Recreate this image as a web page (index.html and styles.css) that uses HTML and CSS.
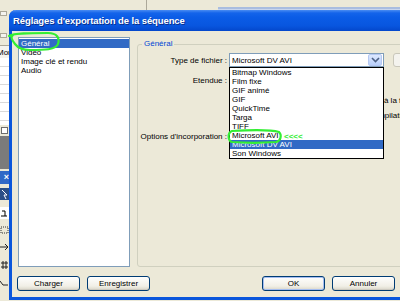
FILE: index.html
```html
<!DOCTYPE html>
<html lang="fr">
<head>
  <meta charset="UTF-8" />
  <title>Réglages d'exportation de la séquence</title>
  <link rel="stylesheet" href="styles.css">
</head>
<body>
  <!-- application behind the dialog -->
  <div class="app">
    <div class="app-top">
      <div class="top-pane"></div>
      <div class="top-pane right"></div>
    </div>
    <aside class="app-side">
      <div class="side-top"><span class="mini-btn"></span><span class="mini-btn"></span></div>
      <div class="side-tab">Mon</div>
      <div class="side-list"></div>
      <div class="side-icon"><span></span></div>
      <div class="side-dark"></div>
      <div class="palette-head">×</div>
      <div class="tools">
        <svg width="9" height="14" viewBox="0 0 9 14"><rect x="0" y="1" width="9" height="12" fill="#2b4f86"/><path d="M2 3 L7 8 L4 8 L6 12" stroke="#fff" fill="none"/></svg>
        <svg width="9" height="12" viewBox="0 0 9 12"><rect width="9" height="12" fill="#fff"/><path d="M2 4 L5 4 L5 9 M1 9 L7 9" stroke="#000" fill="none"/></svg>
        <svg width="9" height="10" viewBox="0 0 9 10"><rect x="1" y="2" width="7" height="6" fill="none" stroke="#333" stroke-dasharray="1 1"/></svg>
        <svg width="9" height="12" viewBox="0 0 9 12"><path d="M0 6 L8 6 M5 3 L8 6 L5 9" stroke="#222" fill="none"/></svg>
        <svg width="9" height="12" viewBox="0 0 9 12"><path d="M3 2 L3 10 M6 2 L6 10 M1 4 L8 4 M1 8 L8 8" stroke="#222" fill="none"/></svg>
        <svg width="9" height="12" viewBox="0 0 9 12"><path d="M0 4 L3 8 L8 8" stroke="#222" fill="none"/></svg>
      </div>
    </aside>
  </div>

  <!-- the dialog window -->
  <div class="dialog">
    <div class="titlebar">Réglages d'exportation de la séquence</div>
    <div class="dlg-body">
      <div class="dlg-main">
        <ul class="cat-list">
          <li class="sel">Général</li>
          <li>Vidéo</li>
          <li>Image clé et rendu</li>
          <li>Audio</li>
        </ul>

        <fieldset class="group">
          <legend>Général</legend>
          <div class="form">
            <label>Type de fichier :</label>
            <div class="ctl">
              <div class="combo">
                <span>Microsoft DV AVI</span>
                <span class="arrow"><svg width="9" height="6" viewBox="0 0 9 6"><path d="M1 1 L4.5 4.5 L8 1" stroke="#4d6185" stroke-width="1.6" fill="none"/></svg></span>
                <ul class="droplist">
                  <li>Bitmap Windows</li>
                  <li>Film fixe</li>
                  <li>GIF animé</li>
                  <li>GIF</li>
                  <li>QuickTime</li>
                  <li>Targa</li>
                  <li>TIFF</li>
                  <li>Microsoft AVI</li>
                  <li class="sel">Microsoft DV AVI</li>
                  <li>Son Windows</li>
                </ul>
              </div>
              <button class="btn side" disabled></button>
            </div>

            <label>Etendue :</label>
            <div class="ctl">
              <div class="combo"><span class="arrow"></span></div>
            </div>

            <span></span>
            <div class="checks">
              <div class="check-line">
                <span class="check-item"><i class="box"></i></span>
                <span class="check-item"><i class="box"></i><span class="cut">Ajouter au projet à la fin</span></span>
              </div>
              <div class="check-line">
                <span class="check-item"><i class="box"></i></span>
                <span class="check-item"><i class="box"></i><span class="cut">Bip en fin de compilation</span></span>
              </div>
            </div>

            <label>Options d'incorporation :</label>
            <div class="ctl">
              <div class="combo"><span class="arrow"></span></div>
            </div>
          </div>
        </fieldset>
      </div>

      <div class="dlg-buttons">
        <div class="btn-group">
          <button class="btn">Charger</button>
          <button class="btn">Enregistrer</button>
        </div>
        <div class="btn-group">
          <button class="btn default">OK</button>
          <button class="btn">Annuler</button>
        </div>
      </div>
    </div>
  </div>

  <!-- hand drawn green marks on top of the screenshot -->
  <svg class="marks" width="400" height="301" viewBox="0 0 400 301">
    <path d="M9 36 C14 33 30 33 48 33 C57 33 60 38 58 44 C56 50 44 50 30 50 C22 50 18 48 15 44 C12 40 10 37 13 35" />
    <path d="M232 131 C250 130 272 130 279 132 C282 135 281 141 276 142 C262 143 245 143 232 142 C228 141 227 133 232 131 Z" />
    <text x="284" y="139">&lt;&lt;&lt;&lt;</text>
  </svg>
</body>
</html>
```

FILE: styles.css
```css
* {
  margin: 0;
  padding: 0;
  box-sizing: border-box;
}

html, body {
  width: 400px;
  height: 301px;
  overflow: hidden;
  background: #ece9d8;
  font-family: "Liberation Sans", Arial, sans-serif;
  font-size: 8px;
  color: #000;
}

body {
  position: relative;
}

/* background application */
.app {
  display: grid;
  grid-template-columns: 9px 1fr;
  grid-template-rows: 10px 1fr;
  height: 301px;
}

.app-top {
  grid-column: 1 / 3;
  display: flex;
}

.top-pane {
  width: 147px;
  border-right: 1px solid #aca899;
}

.top-pane.right {
  flex: 1;
  margin: 7px 0 0 71px;
  border-right: 0;
  border-top: 2px solid #a9bde0;
  background: #c9d6ee;
}

.app-side {
  display: flex;
  flex-direction: column;
  overflow: hidden;
}

.side-top {
  height: 35px;
  display: flex;
  flex-direction: column;
  gap: 17px;
  padding-top: 1px;
}

.mini-btn {
  width: 7px;
  height: 5px;
  border: 1px solid #aca899;
  background: #f4f3ee;
}

.side-tab {
  height: 13px;
  line-height: 13px;
  background: #f4f3ee;
  border-top: 1px solid #aca899;
  white-space: nowrap;
  overflow: hidden;
  text-indent: -3px;
}

.side-list {
  height: 67px;
  background: repeating-linear-gradient(#fff 0, #fff 8px, #d9d9d9 8px, #d9d9d9 9px);
}

.side-icon {
  height: 11px;
  padding: 2px 0 0 1px;
}

.side-icon span {
  display: block;
  width: 7px;
  height: 7px;
  border: 1px solid #6d6d6d;
  background: #fff;
}

.side-dark {
  height: 33px;
  background: #7b7b7b;
}

.palette-head {
  height: 13px;
  margin-top: 2px;
  background: #3169c6;
  color: #fff;
  font-weight: bold;
  font-size: 9px;
  line-height: 13px;
  text-align: right;
}

.tools {
  display: flex;
  flex-direction: column;
  gap: 6px;
  padding-top: 3px;
}

.tools svg {
  display: block;
}

/* dialog */
.dialog {
  position: absolute;
  left: 9px;
  top: 10px;
  width: 420px;
  height: 290px;
  border: 3px solid #0a56dc;
  border-top: 0;
  border-radius: 7px 7px 0 0;
  background: #ece9d8;
  display: flex;
  flex-direction: column;
}

.titlebar {
  height: 21px;
  margin: 0 -3px;
  padding-left: 4px;
  border-radius: 7px 7px 0 0;
  background: linear-gradient(#4a8cf2 0, #1464ea 3px, #0b5ce6 35%, #0856df 75%, #0447cb 100%);
  color: #fff;
  font-weight: bold;
  font-size: 9.5px;
  letter-spacing: -0.1px;
  line-height: 21px;
  text-shadow: 1px 1px 0 #0a2f8a;
}

.dlg-body {
  flex: 1;
  display: flex;
  flex-direction: column;
  padding: 6px 0 0 6px;
}

.dlg-main {
  height: 230px;
  display: flex;
  gap: 7px;
}

.cat-list {
  list-style: none;
  width: 112px;
  border: 1px solid #7f9db9;
  background: #fff;
}

.cat-list li {
  height: 9px;
  line-height: 9px;
  padding-left: 2px;
  white-space: nowrap;
}

.cat-list li:first-child {
  margin-top: 1px;
}

li.sel {
  background: #316ac5;
  color: #fff;
}

.group {
  flex: 1;
  min-width: 0;
  margin-top: 2px;
  padding: 4px 0 0 0;
  border: 1px solid #d0d0bf;
  border-radius: 3px;
}

.group legend {
  margin-left: 4px;
  padding: 0 2px;
  line-height: 10px;
  color: #0046d5;
}

.form {
  display: grid;
  grid-template-columns: 89px 1fr;
  column-gap: 2px;
  row-gap: 6px;
  align-items: center;
}

.form label {
  text-align: right;
  white-space: nowrap;
}

.ctl {
  display: flex;
  align-items: center;
}

.combo {
  position: relative;
  width: 155px;
  height: 14px;
  border: 1px solid #7f9db9;
  background: #fff;
  padding-left: 2px;
  display: flex;
  align-items: center;
  white-space: nowrap;
}

.arrow {
  margin-left: auto;
  margin-right: 1px;
  width: 14px;
  height: 12px;
  border-radius: 2px;
  border: 1px solid #b5c8f2;
  background: linear-gradient(#dde8fe, #b9cffb);
  display: flex;
  align-items: center;
  justify-content: center;
}

.droplist {
  position: absolute;
  z-index: 2;
  top: 13px;
  left: -1px;
  width: 155px;
  list-style: none;
  border: 1px solid #000;
  background: #fff;
}

.droplist li {
  height: 9px;
  line-height: 9px;
  padding-left: 2px;
  white-space: nowrap;
}

.btn {
  height: 15px;
  width: 63px;
  font-family: inherit;
  font-size: 8px;
  color: #000;
  border: 1px solid #003c74;
  border-radius: 3px;
  background: linear-gradient(#fefefe, #f1efe6 70%, #d9d5c8);
  box-shadow: inset 0 -1px 0 #cdcac0;
}

.btn.default {
  box-shadow: inset 0 0 0 1px #a5bdf0;
}

.btn.side {
  width: 90px;
  height: 14px;
  margin-left: 9px;
  border-color: #c9c7ba;
  background: #f4f3ee;
  box-shadow: none;
}

.checks {
  display: flex;
  flex-direction: column;
}

.check-line {
  height: 15px;
  display: flex;
  align-items: center;
  white-space: nowrap;
}

.check-item {
  display: flex;
  align-items: center;
  gap: 3px;
}

.check-item:first-child {
  width: 81px;
}

.box {
  width: 10px;
  height: 10px;
  border: 1px solid #1c5180;
  background: #f3f3ef;
}

.dlg-buttons {
  width: 378px;
  margin: 9px 0 0 -1px;
  display: flex;
  justify-content: space-between;
}

.btn-group {
  display: flex;
  gap: 7px;
}

/* annotation marks */
.marks {
  position: absolute;
  left: 0;
  top: 0;
  z-index: 5;
  pointer-events: none;
}

.marks path {
  fill: none;
  stroke: #33ee33;
  stroke-width: 2.2;
  stroke-linecap: round;
}

.marks text {
  fill: #33ee33;
  font-family: "Liberation Sans", Arial, sans-serif;
  font-size: 8px;
  font-weight: bold;
}
```
